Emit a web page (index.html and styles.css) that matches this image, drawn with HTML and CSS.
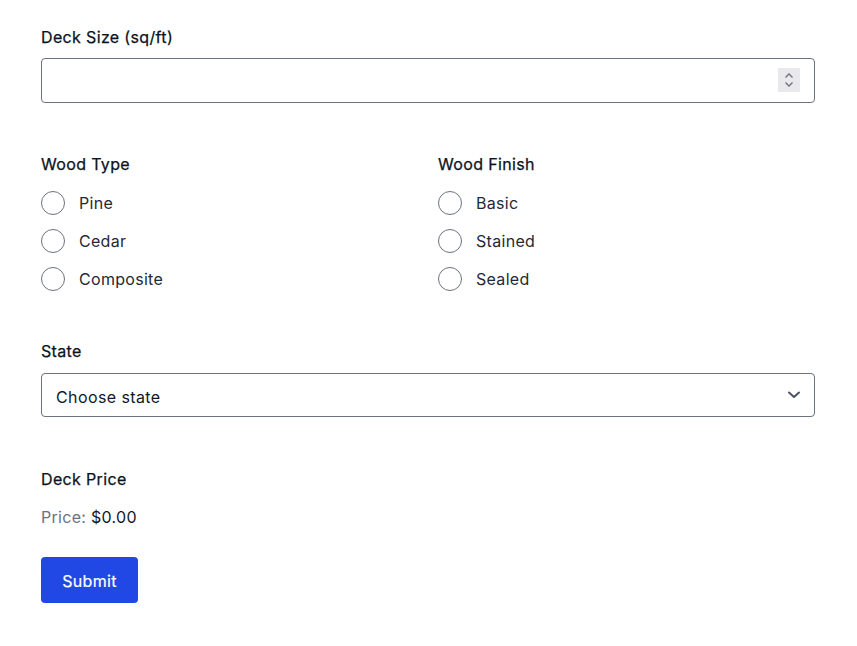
FILE: index.html
```html
<!DOCTYPE html>
<html>
<head>
<meta charset="utf-8">
<link rel="stylesheet" href="styles.css">
</head>
<body>
<form class="form">
  <div class="field">
    <label class="label" for="size">Deck Size (sq/ft)</label>
    <div class="num-wrap">
      <input class="input" id="size" type="text">
      <span class="spinner">
        <svg width="22" height="24" viewBox="0 0 22 24"><path d="M7.5 9.5 L11 6 L14.5 9.5" fill="none" stroke="#6b6f7b" stroke-width="1.3"/><path d="M7.5 14.5 L11 18 L14.5 14.5" fill="none" stroke="#6b6f7b" stroke-width="1.3"/></svg>
      </span>
    </div>
  </div>

  <div class="cols">
    <fieldset class="group">
      <div class="label">Wood Type</div>
      <div class="options">
        <label class="option"><input type="radio" name="wood" class="radio"><span>Pine</span></label>
        <label class="option"><input type="radio" name="wood" class="radio"><span>Cedar</span></label>
        <label class="option"><input type="radio" name="wood" class="radio"><span>Composite</span></label>
      </div>
    </fieldset>
    <fieldset class="group">
      <div class="label">Wood Finish</div>
      <div class="options">
        <label class="option"><input type="radio" name="finish" class="radio"><span>Basic</span></label>
        <label class="option"><input type="radio" name="finish" class="radio"><span>Stained</span></label>
        <label class="option"><input type="radio" name="finish" class="radio"><span>Sealed</span></label>
      </div>
    </fieldset>
  </div>

  <div class="field state">
    <label class="label label-state" for="state">State</label>
    <div class="select-wrap">
      <select class="select" id="state"><option>Choose state</option></select>
      <svg class="chev" width="14" height="10" viewBox="0 0 14 10"><path d="M2 2.5 L7 7 L12 2.5" fill="none" stroke="#4b5563" stroke-width="2" stroke-linecap="round" stroke-linejoin="round"/></svg>
    </div>
  </div>

  <div class="price-block">
    <div class="label">Deck Price</div>
    <p class="price"><span class="muted">Price:</span> $0.00</p>
  </div>

  <button type="button" class="btn">Submit</button>
</form>
</body>
</html>
```
FILE: styles.css
```css
* { box-sizing: border-box; }
body {
  margin: 0;
  background: #fff;
  font-family: Inter, "Noto Sans", sans-serif;
  color: #111827;
  font-size: 16px;
}
.form {
  padding: 25px 42px 0 41px;
  width: 857px;
}
.label {
  display: block;
  font-size: 16px;
  line-height: 24px;
  font-weight: 400;
  color: #0b1220;
  letter-spacing: 0.35px;
  -webkit-text-stroke: 0.25px #0b1220;
}
.field .label { margin-bottom: 9px; }
.num-wrap { position: relative; }
.input {
  display: block;
  width: 100%;
  height: 45px;
  border: 1px solid #6b7280;
  border-radius: 4px;
  padding: 0 14px;
  font: inherit;
  outline: none;
  background: #fff;
}
.spinner {
  position: absolute;
  right: 15px;
  top: 10px;
  width: 22px;
  height: 24px;
  background: #e9e9ed;
  display: flex;
}
.cols {
  display: grid;
  grid-template-columns: 1fr 1fr;
  column-gap: 20px;
  margin-top: 49px;
}
.group { border: 0; margin: 0; padding: 0; min-width: 0; }
.options {
  display: flex;
  flex-direction: column;
  gap: 14px;
  margin-top: 15px;
}
.option {
  display: flex;
  align-items: center;
  gap: 14px;
  height: 24px;
  font-size: 16px;
  color: #1f2937;
  letter-spacing: 0.3px;
}
.radio {
  appearance: none;
  -webkit-appearance: none;
  margin: 0;
  width: 24px;
  height: 24px;
  border: 1.3px solid #6b7280;
  border-radius: 50%;
  background: #fff;
  flex: none;
}
.state { margin-top: 48px; }
.label-state { margin-bottom: 10px !important; }
.select-wrap { position: relative; }
.select {
  appearance: none;
  -webkit-appearance: none;
  display: block;
  width: 100%;
  height: 44px;
  border: 1px solid #6b7280;
  border-radius: 4px;
  padding: 3px 14px 0;
  font: inherit;
  font-size: 16px;
  color: #111827;
  background: #fff;
  letter-spacing: 0.4px;
}
.chev {
  position: absolute;
  right: 14px;
  top: 17px;
}
.price-block { margin-top: 50px; }
.price {
  margin: 14px 0 0;
  line-height: 24px;
  font-size: 16px;
  color: #111827;
  letter-spacing: 0.3px;
}
.muted { color: #6b7280; }
.btn {
  margin-top: 28px;
  width: 97px;
  height: 46px;
  border: 0;
  border-radius: 4px;
  background: #2148e4;
  color: #fff;
  font: inherit;
  font-size: 16px;
  font-weight: 400;
  letter-spacing: 0.3px;
  padding-top: 2px;
  -webkit-text-stroke: 0.2px #fff;
}
```
